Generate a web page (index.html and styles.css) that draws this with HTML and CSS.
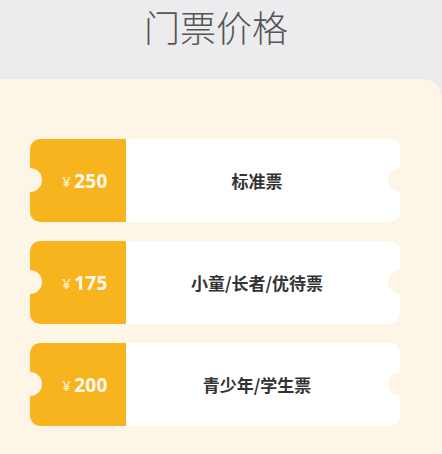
FILE: index.html
```html
<!DOCTYPE html>
<html lang="zh">
<head>
    <meta charset="UTF-8">
    <meta name="viewport" content="width=device-width, initial-scale=1.0">
    <title>门票价格</title>
    <link rel="stylesheet" href="styles.css">
</head>
<body>
    <div class="header">
        <h1>门票价格</h1>
    </div>
    <div class="panel">
        <div class="ticket">
            <div class="price"><span class="yen">¥</span>250</div>
            <div class="name">标准票</div>
        </div>
        <div class="ticket">
            <div class="price"><span class="yen">¥</span>175</div>
            <div class="name">小童/长者/优待票</div>
        </div>
        <div class="ticket">
            <div class="price"><span class="yen">¥</span>200</div>
            <div class="name">青少年/学生票</div>
        </div>
    </div>
</body>
</html>
```

FILE: styles.css
```css
body {
    margin: 0;
    background-color: #ececee;
    font-family: "Open Sans", "Noto Sans CJK SC", sans-serif;
}
.header {
    height: 79px;
    display: flex;
    justify-content: center;
}
.header h1 {
    margin: 0;
    padding-top: 2px;
    padding-right: 10px;
    font-family: "Noto Sans CJK SC", sans-serif;
    font-weight: 300;
    font-size: 36px;
    line-height: 48px;
    color: #555;
}
.panel {
    background-color: #fdf6e7;
    border-top-right-radius: 20px;
    padding: 60px 42px 28px 30px;
    display: flex;
    flex-direction: column;
    gap: 19px;
}
.ticket {
    position: relative;
    display: flex;
    height: 83px;
    border-radius: 10px;
    overflow: hidden;
}
.ticket::before, .ticket::after {
    content: "";
    position: absolute;
    top: 29px;
    width: 24px;
    height: 24px;
    border-radius: 50%;
    background-color: #fdf6e7;
}
.ticket::before {
    left: -12px;
}
.ticket::after {
    right: -12px;
}
.price {
    width: 96px;
    background-color: #f8b41f;
    color: #fffaf0;
    display: flex;
    align-items: center;
    justify-content: center;
    padding-left: 14px;
    box-sizing: border-box;
    font-size: 19px;
    font-weight: 700;
    letter-spacing: 0.3px;
}
.yen {
    font-size: 15px;
    font-weight: 600;
    color: rgba(255, 250, 240, 0.8);
    margin-right: 3px;
}
.name {
    flex: 1;
    background-color: #fff;
    display: flex;
    align-items: center;
    justify-content: center;
    padding-right: 12px;
    font-family: "Noto Sans CJK SC", sans-serif;
    font-size: 17px;
    font-weight: 700;
    color: #333;
}
```
